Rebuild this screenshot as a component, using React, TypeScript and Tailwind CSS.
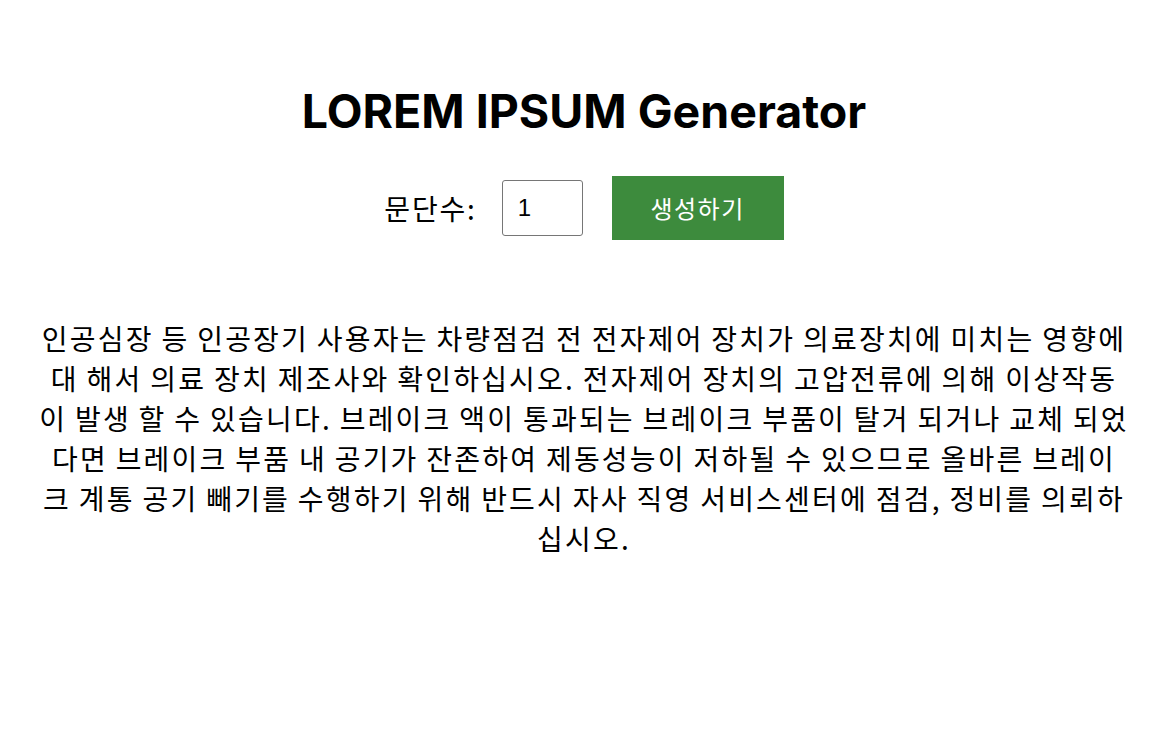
import { useState } from "react";

// line breaks follow the original render (Korean breaks between syllables)
const LINES = [
  "인공심장 등 인공장기 사용자는 차량점검 전 전자제어 장치가 의료장치에 미치는 영향에",
  "대 해서 의료 장치 제조사와 확인하십시오. 전자제어 장치의 고압전류에 의해 이상작동",
  "이 발생 할 수 있습니다. 브레이크 액이 통과되는 브레이크 부품이 탈거 되거나 교체 되었",
  "다면 브레이크 부품 내 공기가 잔존하여 제동성능이 저하될 수 있으므로 올바른 브레이",
  "크 계통 공기 빼기를 수행하기 위해 반드시 자사 직영 서비스센터에 점검, 정비를 의뢰하",
  "십시오.",
];

export default function App() {
  const [count, setCount] = useState("1");

  return (
    <div className="min-h-screen bg-white text-black flex flex-col items-center pt-[84px] px-[32px] font-['Inter','Noto_Sans_CJK_KR',sans-serif]">
      <h1 className="text-[46.5px] leading-[54px] font-bold">LOREM IPSUM Generator</h1>

      {/* controls */}
      <div className="mt-[38px] flex items-center">
        <label className="text-[28px] tracking-[1.8px] font-['Noto_Sans_CJK_KR',sans-serif]">문단수:</label>
        <input
          type="number"
          value={count}
          onChange={(e) => setCount(e.target.value)}
          className="ml-[25px] w-[81px] h-[56px] border border-[#767676] rounded-[3px] px-[15px] text-[24px] font-['Liberation_Sans',sans-serif] outline-none"
        />
        <button className="ml-[29px] w-[172px] h-[64px] bg-[#3d8b3d] text-white text-[24px] tracking-[1.5px] font-['Noto_Sans_CJK_KR',sans-serif]">
          생성하기
        </button>
      </div>

      <p className="mt-[78px] text-center text-[28px] leading-[40px] tracking-[2.2px] [word-spacing:-0.7px] font-['Noto_Sans_CJK_KR',sans-serif]">
        {LINES.map((line, i) => (
          <span key={i} className="block whitespace-nowrap">
            {line}
          </span>
        ))}
      </p>
    </div>
  );
}
